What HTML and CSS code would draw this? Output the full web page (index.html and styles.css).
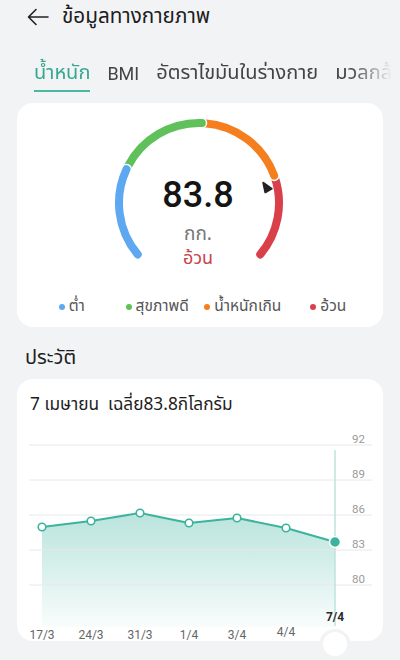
FILE: index.html
```html
<!DOCTYPE html>
<html lang="th">
<head>
<meta charset="utf-8">
<title>ข้อมูลทางกายภาพ</title>
<link rel="stylesheet" href="styles.css">
</head>
<body>
<header class="topbar">
  <svg class="back" width="22" height="18" viewBox="0 0 22 18" aria-hidden="true">
    <path d="M21 9H2M9 1.5L1.5 9L9 16.5" fill="none" stroke="#222" stroke-width="1.6" stroke-linecap="round" stroke-linejoin="round"/>
  </svg>
  <h1 class="title">ข้อมูลทางกายภาพ</h1>
</header>

<nav class="tabs">
  <span class="tab active">น้ำหนัก</span>
  <span class="tab latin">BMI</span>
  <span class="tab">อัตราไขมันในร่างกาย</span>
  <span class="tab">มวลกล้ามเนื้อ</span>
</nav>

<section class="card gauge-card">
  <div class="gauge">
    <svg class="gauge-arcs" width="366" height="175" viewBox="0 0 366 175" aria-hidden="true">
      <g fill="none" stroke-linecap="round">
        <path d="M258.09 75.28A80 80 0 0 1 243.28 151.42" stroke="#fff" stroke-width="11"/>
        <path d="M258.09 75.28A80 80 0 0 1 243.28 151.42" stroke="#d9404a" stroke-width="8"/>
        <path d="M187.58 20.19A80 80 0 0 1 257.18 72.64" stroke="#fff" stroke-width="11"/>
        <path d="M187.58 20.19A80 80 0 0 1 257.18 72.64" stroke="#f57f1e" stroke-width="8"/>
        <path d="M110.72 63.68A80 80 0 0 1 184.79 20.05" stroke="#fff" stroke-width="11"/>
        <path d="M110.72 63.68A80 80 0 0 1 184.79 20.05" stroke="#60c05a" stroke-width="8"/>
        <path d="M120.72 151.42A80 80 0 0 1 109.50 66.19" stroke="#fff" stroke-width="11"/>
        <path d="M120.72 151.42A80 80 0 0 1 109.50 66.19" stroke="#5ea8f2" stroke-width="8"/>
      </g>
      <polygon points="246.3,79.7 254.7,85.7 248.3,89.3" fill="#222" stroke="#222" stroke-width="2" stroke-linejoin="round"/>
    </svg>
    <div class="readout">
      <div class="value">83.8</div>
      <div class="unit">กก.</div>
      <div class="status">อ้วน</div>
    </div>
  </div>
  <ul class="legend">
    <li><i class="dot blue"></i>ต่ำ</li>
    <li><i class="dot green"></i>สุขภาพดี</li>
    <li><i class="dot orange"></i>น้ำหนักเกิน</li>
    <li><i class="dot red"></i>อ้วน</li>
  </ul>
</section>

<h2 class="section-title">ประวัติ</h2>

<section class="card chart-card">
  <div class="chart-title">7 เมษายน&nbsp;&nbsp;เฉลี่ย83.8กิโลกรัม</div>
  <svg class="chart" width="366" height="222" viewBox="0 0 366 222">
    <defs>
      <linearGradient id="fillGrad" x1="0" y1="0" x2="0" y2="1">
        <stop offset="0" stop-color="#3cb39e" stop-opacity="0.36"/>
        <stop offset="1" stop-color="#3cb39e" stop-opacity="0.03"/>
      </linearGradient>
    </defs>
    <path d="M25 107L74 101L123 93L172 103L220 98L269 108L318 122L318 207L25 207Z" fill="url(#fillGrad)"/>
    <g stroke="#e6e8ea" stroke-width="1">
      <line x1="12" y1="25" x2="355" y2="25"/>
      <line x1="12" y1="60" x2="355" y2="60"/>
      <line x1="12" y1="95" x2="355" y2="95"/>
      <line x1="12" y1="130" x2="355" y2="130"/>
      <line x1="12" y1="165" x2="355" y2="165"/>
    </g>
    <g class="ylab" text-anchor="end">
      <text x="348" y="23">92</text>
      <text x="348" y="58">89</text>
      <text x="348" y="93">86</text>
      <text x="348" y="128">83</text>
      <text x="348" y="163">80</text>
    </g>
    <line x1="318" y1="30" x2="318" y2="206" stroke="#bfe3dc" stroke-width="1.5"/>
    <polyline points="25,107 74,101 123,93 172,103 220,98 269,108 318,122" fill="none" stroke="#3cb39e" stroke-width="2" stroke-linejoin="round"/>
    <g fill="#fff" stroke="#3cb39e" stroke-width="1.6">
      <circle cx="25" cy="107" r="3.8"/>
      <circle cx="74" cy="101" r="3.8"/>
      <circle cx="123" cy="93" r="3.8"/>
      <circle cx="172" cy="103" r="3.8"/>
      <circle cx="220" cy="98" r="3.8"/>
      <circle cx="269" cy="108" r="3.8"/>
    </g>
    <circle cx="318" cy="122" r="5.5" fill="#3cb39e" stroke="#fff" stroke-width="1.5"/>
    <g class="xlab" text-anchor="middle">
      <text x="25" y="219">17/3</text>
      <text x="74" y="219">24/3</text>
      <text x="123" y="219">31/3</text>
      <text x="172" y="219">1/4</text>
      <text x="220" y="219">3/4</text>
      <text x="269" y="216">4/4</text>
      <text class="cur" x="318" y="201">7/4</text>
    </g>
  </svg>
  <span class="notch"></span>
  <span class="handle"></span>
</section>
</body>
</html>
```

FILE: styles.css
```css
* { box-sizing: border-box; }

body {
  margin: 0;
  width: 400px;
  height: 660px;
  overflow: hidden;
  background: #f2f3f5;
  font-family: "Noto Sans Thai", "Noto Sans", Roboto, sans-serif;
  color: #222;
}

.topbar {
  height: 34px;
  display: flex;
  align-items: center;
  padding-left: 27px;
  gap: 13px;
}

.back { display: block; }

.title {
  margin: 0;
  font-size: 20.7px;
  font-weight: 400;
  line-height: 32px;
  color: #1d1d1d;
}

.tabs {
  margin-top: 21px;
  padding: 6px 0 0 34px;
  display: flex;
  gap: 17px;
  white-space: nowrap;
  overflow-x: clip;
  overflow-y: visible;
  -webkit-mask-image: linear-gradient(to right, #000 350px, transparent 392px);
  mask-image: linear-gradient(to right, #000 350px, transparent 392px);
}

.tab {
  font-size: 20px;
  line-height: 25px;
  padding-bottom: 4px;
  border-bottom: 2px solid transparent;
  color: #444;
  flex: none;
}

.tab.latin {
  font-family: Roboto, sans-serif;
  font-size: 18px;
}

.tab.active {
  color: #37a993;
  border-bottom-color: #4bb8a4;
}

.card {
  margin: 0 17px;
  background: #fff;
  border-radius: 16px;
}

.gauge-card {
  margin-top: 11px;
  height: 224px;
  padding-bottom: 12px;
}

.gauge {
  display: grid;
  height: 175px;
}

.gauge-arcs,
.readout {
  grid-area: 1 / 1;
}

.gauge-arcs { display: block; }

.readout {
  padding-top: 72px;
  display: flex;
  flex-direction: column;
  align-items: center;
  padding-right: 4px;
}

.value {
  font-family: Roboto, sans-serif;
  font-size: 36px;
  line-height: 40px;
  font-weight: 500;
  color: #141414;
}

.unit {
  margin-top: 8px;
  font-size: 19px;
  line-height: 23px;
  color: #777;
}

.status {
  margin-top: 1px;
  font-size: 18px;
  line-height: 23px;
  color: #c8434b;
}

.legend {
  list-style: none;
  margin: 19px 0 0;
  padding: 0 12px;
  display: grid;
  grid-template-columns: repeat(4, 1fr);
  justify-items: center;
}

.legend li {
  display: flex;
  align-items: center;
  gap: 4px;
  font-size: 15.5px;
  line-height: 20px;
  color: #555;
}

.dot {
  width: 6px;
  height: 6px;
  border-radius: 50%;
  display: block;
}
.dot.blue { background: #5ea8f2; }
.dot.green { background: #60c05a; }
.dot.orange { background: #f57f1e; }
.dot.red { background: #d9404a; }

.section-title {
  margin: 18px 0 0 25px;
  font-size: 20px;
  font-weight: 400;
  line-height: 26px;
  color: #1d1d1d;
}

.chart-card {
  position: relative;
  margin-top: 8px;
  height: 262px;
  padding-top: 14px;
}

.chart-title {
  padding: 0 13px;
  font-size: 17.3px;
  line-height: 24px;
  color: #1d1d1d;
}

.chart {
  display: block;
  margin-top: 3px;
  overflow: visible;
}

.ylab text {
  font-family: Roboto, sans-serif;
  font-size: 11.5px;
  fill: #9a9a9a;
}

.xlab text {
  font-family: Roboto, sans-serif;
  font-size: 12px;
  fill: #666;
}

.xlab text.cur {
  font-weight: 700;
  fill: #2a2a2a;
}

.notch {
  position: absolute;
  left: 302px;
  top: 250px;
  width: 32px;
  height: 32px;
  border-radius: 50%;
  background: #f2f3f5;
}

.handle {
  position: absolute;
  left: 306px;
  top: 253px;
  width: 24px;
  height: 24px;
  border-radius: 50%;
  background: #fff;
}
```
